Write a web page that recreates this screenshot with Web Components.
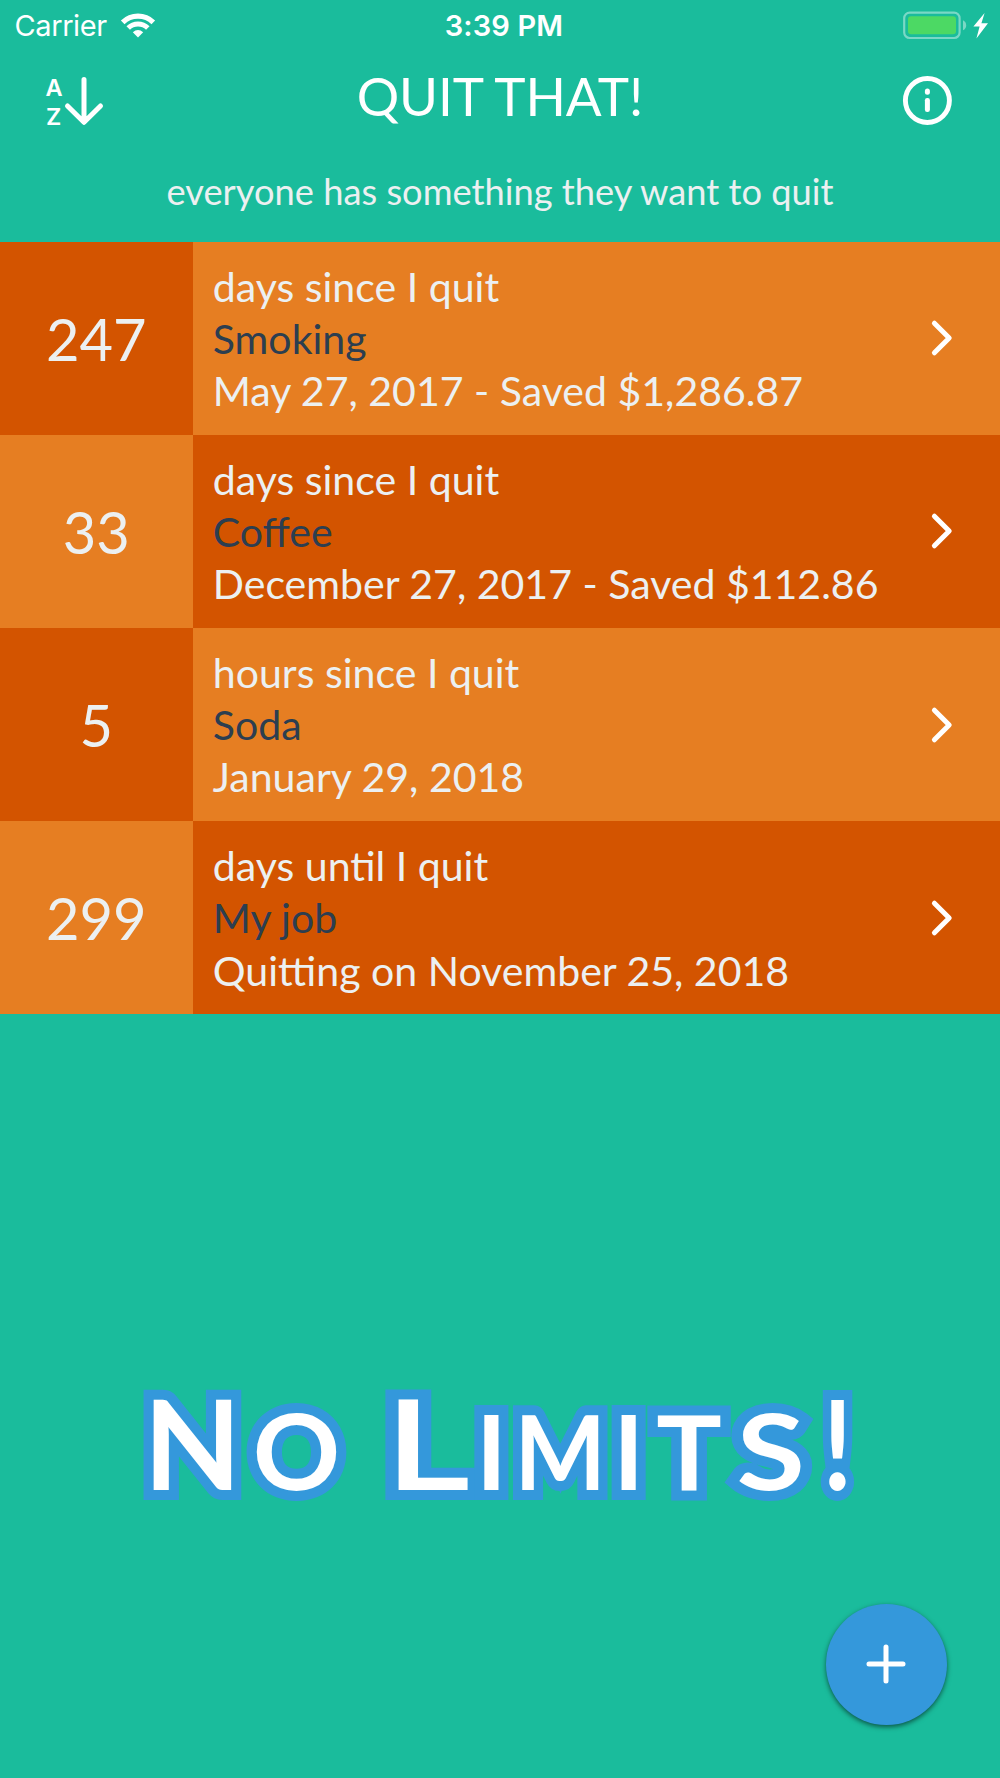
<!DOCTYPE html>
<html lang="en">
<head>
<meta charset="utf-8">
<meta name="viewport" content="width=device-width, initial-scale=1">
<title>Quit That!</title>
<style>
  html, body {
    margin: 0;
    height: 100%;
  }
  body {
    background: #1abc9c;
    font-family: Lato, sans-serif;
    overflow: hidden;
  }
</style>
</head>
<body>
<quit-app></quit-app>

<script>
const quits = [
  { count: "247", label: "days since I quit", name: "Smoking", detail: "May 27, 2017 - Saved $1,286.87" },
  { count: "33", label: "days since I quit", name: "Coffee", detail: "December 27, 2017 - Saved $112.86" },
  { count: "5", label: "hours since I quit", name: "Soda", detail: "January 29, 2018" },
  { count: "299", label: "days until I quit", name: "My job", detail: "Quitting on November 25, 2018" }
];

class StatusBar extends HTMLElement {
  constructor() {
    super();
    this.attachShadow({ mode: 'open' });
  }

  connectedCallback() {
    this.shadowRoot.innerHTML = `
      <style>
        :host {
          display: grid;
          grid-template-columns: 1fr auto 1fr;
          align-items: center;
          height: 50px;
          color: white;
          font: 400 29px/50px Inter, sans-serif;
        }
        .left, .right {
          display: flex;
          align-items: center;
        }
        .left {
          padding-left: 14.5px;
          letter-spacing: -0.4px;
          gap: 13.5px;
        }
        .right {
          justify-content: flex-end;
          padding-right: 10px;
        }
        span, .time {
          padding-top: 1px;
        }
        .time {
          font-weight: 600;
          letter-spacing: 0.15px;
          padding-left: 8px;
        }
        svg {
          display: block;
        }
      </style>
      <div class="left">
        <span>Carrier</span>
        <svg width="36" height="50" viewBox="120 0 36 50" fill="none" stroke="white">
          <path d="M122.700 21.300A22 22 0 0 1 153.300 21.300" stroke-width="5.200"/>
          <path d="M128.200 27A14 14 0 0 1 147.800 27" stroke-width="5"/>
          <path d="M132.800 31.300Q138 26.800 143.200 31.300L138 36.500Z" fill="white" stroke="none"/>
        </svg>
      </div>
      <div class="time">3:39 PM</div>
      <div class="right">
        <svg width="88" height="50" viewBox="902 0 88 50">
          <rect x="904.200" y="11.600" width="55.400" height="25.400" rx="5.500" fill="none" stroke="white" stroke-opacity=".42" stroke-width="2.200"/>
          <rect x="908" y="15.200" width="48" height="18" rx="3" fill="#4cd964"/>
          <path d="M963 19.300Q966.200 20.800 966.200 24.300T963 29.300Z" fill="white" fill-opacity=".42"/>
          <path d="M984.600 12L973.400 25.600H979.600L976.400 37.400L988 22.200H981.400Z" fill="white"/>
        </svg>
      </div>
    `;
  }
}

class AppHeader extends HTMLElement {
  constructor() {
    super();
    this.attachShadow({ mode: 'open' });
  }

  connectedCallback() {
    this.shadowRoot.innerHTML = `
      <style>
        :host {
          display: block;
          height: 191.700px;
          color: white;
        }
        .bar {
          display: grid;
          grid-template-columns: 120px 1fr 120px;
          height: 100px;
        }
        h1 {
          margin: 0;
          font-size: 53px;
          font-weight: 400;
          letter-spacing: -0.1px;
          line-height: 92px;
          text-align: center;
        }
        .info {
          justify-self: end;
        }
        p {
          margin: 0;
          color: #ecf0f1;
          font-size: 36.25px;
          line-height: 83px;
          text-align: center;
        }
        text {
          font: 600 23.5px Inter, sans-serif;
        }
        svg {
          display: block;
        }
      </style>
      <div class="bar">
        <svg width="120" height="100" viewBox="0 50 120 100">
          <g fill="white">
            <text x="45.400" y="96">A</text>
            <text x="46" y="125">Z</text>
          </g>
          <path d="M84 79.500V122M67.500 106L84 122.300L100.500 106" fill="none" stroke="white" stroke-width="5" stroke-linecap="round" stroke-linejoin="round"/>
        </svg>
        <h1><slot></slot></h1>
        <svg class="info" width="120" height="100" viewBox="880 50 120 100">
          <circle cx="927.400" cy="100.500" r="22" fill="none" stroke="white" stroke-width="4.900"/>
          <rect x="924.900" y="88.600" width="5" height="6.200" rx="2.500" fill="white"/>
          <rect x="924.900" y="98" width="5" height="14" rx="2.300" fill="white"/>
        </svg>
      </div>
      <p><slot name="tagline"></slot></p>
    `;
  }
}

class QuitRow extends HTMLElement {
  constructor() {
    super();
    this.attachShadow({ mode: 'open' });
  }

  connectedCallback() {
    this.shadowRoot.innerHTML = `
      <style>
        :host {
          display: grid;
          grid-template-columns: 193.200px 1fr;
          height: 193.200px;
          color: #ecf0f1;
          --count-bg: #d35400;
          --row-bg: #e67e22;
        }
        :host(:nth-child(even)) {
          --count-bg: #e67e22;
          --row-bg: #d35400;
        }
        .count {
          display: flex;
          align-items: center;
          justify-content: center;
          padding-right: 0.5px;
          background: var(--count-bg);
          font-size: 57.800px;
        }
        .body {
          display: flex;
          align-items: center;
          justify-content: space-between;
          padding: 0 45px 0 19.6px;
          background: var(--row-bg);
        }
        .text {
          padding-bottom: 0.6px;
          font-size: 41.06px;
          line-height: 52.2px;
          white-space: nowrap;
        }
        .name {
          color: #2c3e50;
        }
        svg {
          display: block;
        }
      </style>
      <div class="count"><slot name="count"></slot></div>
      <div class="body">
        <div class="text">
          <div><slot name="label"></slot></div>
          <div class="name"><slot></slot></div>
          <div><slot name="detail"></slot></div>
        </div>
        <svg width="26" height="40" viewBox="0 0 26 40">
          <path d="M5.400 5.200L20.200 20L5.400 34.800" fill="none" stroke="white" stroke-width="5" stroke-linecap="round" stroke-linejoin="round"/>
        </svg>
      </div>
    `;
  }
}

class LimitsBanner extends HTMLElement {
  constructor() {
    super();
    this.attachShadow({ mode: 'open' });
  }

  connectedCallback() {
    this.shadowRoot.innerHTML = `
      <style>
        :host {
          display: block;
        }
        svg {
          display: block;
          overflow: visible;
        }
        text {
          font: 700 125px Lato, sans-serif;
          fill: white;
          stroke: #3498db;
          stroke-width: 20px;
          stroke-miterlimit: 3;
          paint-order: stroke;
        }
        .sm {
          font-size: 104px;
        }
        .round {
          font-size: 106px;
        }
      </style>
      <svg width="1000" height="180" viewBox="0 1350 1000 180">
        <text y="1489.600"><tspan x="143.500" textLength="97.800" lengthAdjust="spacingAndGlyphs">N</tspan><tspan class="round" x="252.700" textLength="87.500" lengthAdjust="spacingAndGlyphs">O</tspan> <tspan x="384.500" textLength="85.500" lengthAdjust="spacingAndGlyphs" font-weight="600">L</tspan><tspan class="sm" x="476">I</tspan><tspan class="sm" x="514.500" textLength="91.500" lengthAdjust="spacingAndGlyphs">M</tspan><tspan class="sm" x="613.200">I</tspan><tspan class="sm" x="656.200" textLength="65.600" lengthAdjust="spacingAndGlyphs">T</tspan><tspan class="round" x="736.500" textLength="68.500" lengthAdjust="spacingAndGlyphs">S</tspan><tspan x="822.400" textLength="30" lengthAdjust="spacingAndGlyphs">!</tspan></text>
      </svg>
    `;
  }
}

class AddButton extends HTMLElement {
  constructor() {
    super();
    this.attachShadow({ mode: 'open' });
  }

  connectedCallback() {
    this.shadowRoot.innerHTML = `
      <style>
        :host {
          display: block;
        }
        button {
          display: flex;
          align-items: center;
          justify-content: center;
          width: 121px;
          height: 121px;
          padding: 0;
          border: 0;
          border-radius: 50%;
          background: #3498db;
          box-shadow: 0 2px 5px rgba(0, 0, 0, 0.55);
        }
      </style>
      <button aria-label="Add">
        <svg width="40" height="40" viewBox="0 0 40 40">
          <path d="M20 3V37M3 20H37" fill="none" stroke="white" stroke-width="5" stroke-linecap="round"/>
        </svg>
      </button>
    `;
  }
}

class QuitApp extends HTMLElement {
  constructor() {
    super();
    this.attachShadow({ mode: 'open' });
  }

  connectedCallback() {
    const rows = quits.map(q => `
      <quit-row>
        <span slot="count">${q.count}</span>
        <span slot="label">${q.label}</span>
        ${q.name}
        <span slot="detail">${q.detail}</span>
      </quit-row>
    `).join('');

    this.shadowRoot.innerHTML = `
      <style>
        :host {
          display: flex;
          flex-direction: column;
          height: 1778px;
        }
        .empty {
          flex: 1;
          display: flex;
          flex-direction: column;
          justify-content: flex-end;
        }
        add-button {
          align-self: flex-end;
          margin: 74px 53.2px 53.2px 0;
        }
      </style>
      <status-bar></status-bar>
      <app-header>
        QUIT THAT!
        <span slot="tagline">everyone has something they want to quit</span>
      </app-header>
      <div class="list">${rows}</div>
      <div class="empty">
        <limits-banner></limits-banner>
        <add-button></add-button>
      </div>
    `;
  }
}

customElements.define('status-bar', StatusBar);
customElements.define('app-header', AppHeader);
customElements.define('quit-row', QuitRow);
customElements.define('limits-banner', LimitsBanner);
customElements.define('add-button', AddButton);
customElements.define('quit-app', QuitApp);
</script>
</body>
</html>
